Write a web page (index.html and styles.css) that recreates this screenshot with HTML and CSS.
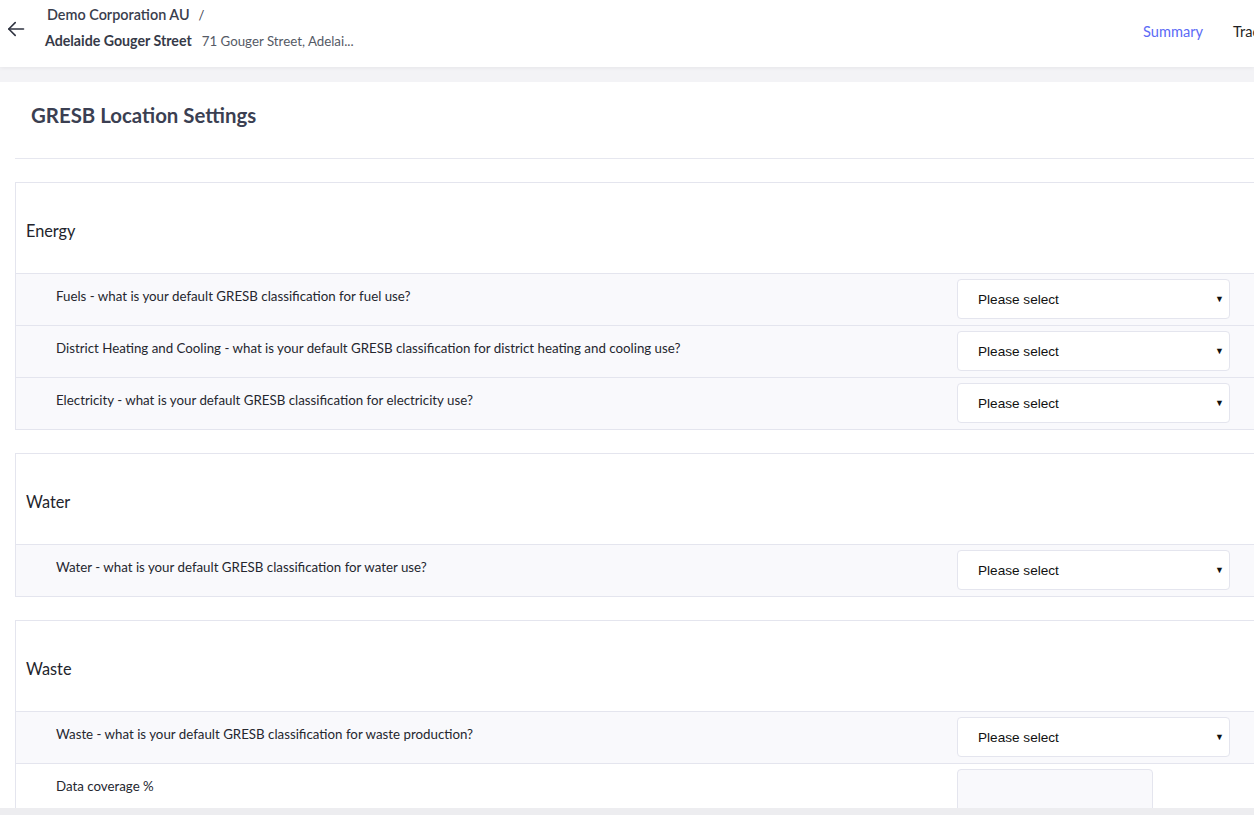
FILE: index.html
```html
<!DOCTYPE html>
<html lang="en">
<head>
<meta charset="utf-8">
<title>GRESB Location Settings</title>
<link rel="stylesheet" href="styles.css">
</head>
<body>
<header class="topbar">
  <div class="top-left">
    <button class="back" aria-label="Back">
      <svg width="18" height="18" viewBox="0 0 18 18" fill="none" stroke="#2f3340" stroke-width="1.6" stroke-linecap="round" stroke-linejoin="round"><path d="M16.5 9H1.8"/><path d="M8.2 2.6L1.8 9l6.4 6.4"/></svg>
    </button>
    <div class="crumbs">
      <div class="crumb-top"><span class="org">Demo Corporation AU</span><span class="sep">/</span></div>
      <div class="crumb-bottom"><span class="site">Adelaide Gouger Street</span><span class="addr">71 Gouger Street, Adelai...</span></div>
    </div>
  </div>
  <nav class="tabs">
    <a class="tab active">Summary</a>
    <a class="tab">Trac</a>
  </nav>
</header>
<div class="gap-band"></div>
<main class="panel">
  <div class="panel-inner">
    <div class="page-title"><h1>GRESB Location Settings</h1></div>

    <section class="card">
      <h2 class="card-head">Energy</h2>
      <div class="row">
        <div class="label">Fuels - what is your default GRESB classification for fuel use?</div>
        <div class="control"><div class="select"><span>Please select</span><span class="caret">▼</span></div></div>
      </div>
      <div class="row">
        <div class="label">District Heating and Cooling - what is your default GRESB classification for district heating and cooling use?</div>
        <div class="control"><div class="select"><span>Please select</span><span class="caret">▼</span></div></div>
      </div>
      <div class="row">
        <div class="label">Electricity - what is your default GRESB classification for electricity use?</div>
        <div class="control"><div class="select"><span>Please select</span><span class="caret">▼</span></div></div>
      </div>
    </section>

    <section class="card">
      <h2 class="card-head">Water</h2>
      <div class="row">
        <div class="label">Water - what is your default GRESB classification for water use?</div>
        <div class="control"><div class="select"><span>Please select</span><span class="caret">▼</span></div></div>
      </div>
    </section>

    <section class="card">
      <h2 class="card-head">Waste</h2>
      <div class="row">
        <div class="label">Waste - what is your default GRESB classification for waste production?</div>
        <div class="control"><div class="select"><span>Please select</span><span class="caret">▼</span></div></div>
      </div>
      <div class="row plain">
        <div class="label">Data coverage %</div>
        <div class="control"><div class="input"></div></div>
      </div>
    </section>
  </div>
</main>
<div class="bottom-band"></div>
</body>
</html>
```

FILE: styles.css
```css
* { box-sizing: border-box; }
html, body { margin: 0; padding: 0; }
body {
  width: 1254px;
  height: 815px;
  overflow: hidden;
  background: #f3f3f6;
  font-family: Lato, "Liberation Sans", sans-serif;
  color: #2a2c36;
}
.topbar {
  height: 67px;
  background: #fff;
  display: flex;
  justify-content: space-between;
  align-items: flex-start;
  box-shadow: 0 1px 4px rgba(0,0,0,0.06);
  position: relative;
  z-index: 1;
}
.top-left { display: flex; align-items: flex-start; }
.back {
  border: 0; background: none; padding: 0;
  margin: 20px 0 0 7px;
  width: 18px; height: 18px;
  display: flex;
}
.crumbs { margin-left: 20px; padding-top: 5px; }
.crumb-top { height: 19px; line-height: 19px; font-size: 14.4px; color: #3a3e4d; font-weight: 600; padding-left: 2px; }
.sep { margin-left: 9px; font-weight: 400; font-size: 13px; }
.crumb-bottom { margin-top: 6px; line-height: 19px; white-space: nowrap; }
.site { font-size: 14.2px; font-weight: 700; color: #363a48; }
.addr { font-size: 13.3px; color: #555a66; margin-left: 10px; }
.tabs { display: flex; gap: 30px; padding-top: 22px; white-space: nowrap; width: 111px; margin-right: 0; }
.tab { font-size: 14.6px; line-height: 20px; color: #1f1f24; text-decoration: none; }
.tab.active { color: #5c6bf6; }
.gap-band { height: 15px; }
.panel {
  background: #fff;
  height: 726px;
  overflow: hidden;
}
.panel-inner {
  margin-left: 15px;
  width: 1265px;
}
.page-title {
  height: 77px;
  border-bottom: 1px solid #e6e7ef;
  padding: 20px 0 0 16px;
}
.page-title h1 {
  margin: 0;
  font-size: 20.4px;
  line-height: 26px;
  font-weight: 700;
  color: #3b3f52;
}
.card {
  margin-top: 23px;
  border: 1px solid #e4e5ee;
  border-right: 0;
}
.card-head {
  margin: 0;
  height: 90px;
  padding: 38px 10px 0;
  font-size: 16.3px;
  line-height: 20px;
  font-weight: 400;
  color: #22242c;
}
.row {
  display: flex;
  border-top: 1px solid #e4e5ee;
  background: #f9f9fc;
  height: 52px;
}
.row.plain { background: #fff; }
.label {
  flex: 1;
  padding: 13px 0 0 40px;
  font-size: 13.3px;
  line-height: 18px;
  color: #25272f;
}
.control { width: 323px; padding-top: 5px; }
.select {
  width: 273px;
  height: 40px;
  background: #fff;
  border: 1px solid #e4e5ee;
  border-radius: 4px;
  display: flex;
  align-items: center;
  justify-content: space-between;
  padding: 0 5px 0 20px;
  font-family: "Liberation Sans", Arial, sans-serif;
  font-size: 13.6px;
  color: #111;
}
.caret { font-size: 9px; }
.input {
  width: 196px;
  height: 46px;
  background: #f9f9fc;
  border: 1px solid #e4e5ee;
  border-radius: 4px;
}
.bottom-band { height: 7px; background: #ededf0; }
```
